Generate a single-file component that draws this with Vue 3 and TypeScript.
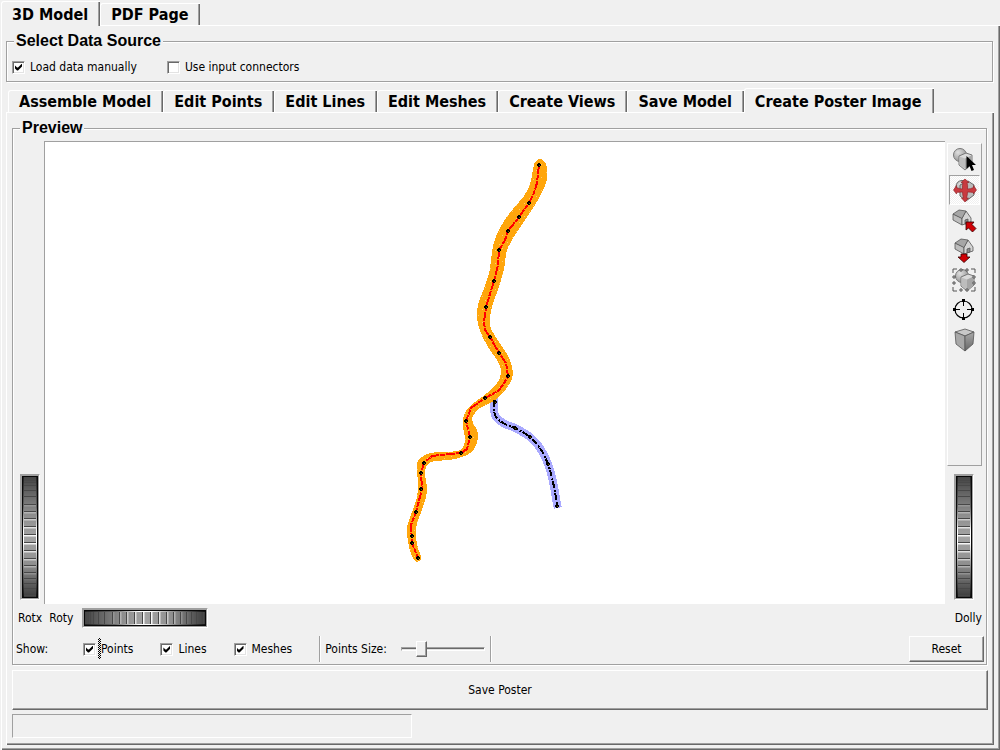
<script setup lang="ts">
import { ref } from 'vue'

type Point = [number, number]

const outerTabs = ['3D Model', 'PDF Page']
const innerTabs = [
  'Assemble Model',
  'Edit Points',
  'Edit Lines',
  'Edit Meshes',
  'Create Views',
  'Save Model',
  'Create Poster Image',
]
const outerTab = ref('3D Model')
const innerTab = ref('Create Poster Image')
const source = ref({ manual: true, connectors: false })
const show = ref({ points: true, lines: true, meshes: true })
const pointsSize = ref(20)

const tools = ['Select', 'Rotate', 'Home', 'Set home', 'View all', 'Seek', 'Projection']
const tool = ref('Rotate')

const ticks = [2, 4, 6, 9, 14, 20, 28, 35, 42, 50, 58, 66, 74, 82, 89, 96, 102, 107, 112, 116, 119]
const glow = (y: number) => Math.max(0, 1 - Math.abs(y - 62) / 42)

function smooth(points: Point[], closed: boolean): string {
  const n = points.length
  const at = (i: number): Point =>
    closed ? points[(i + n) % n] : points[Math.min(n - 1, Math.max(0, i))]
  let d = `M${points[0][0]} ${points[0][1]}`
  for (let i = 0; i < (closed ? n : n - 1); i++) {
    const [a, b, c, e] = [at(i - 1), at(i), at(i + 1), at(i + 2)]
    d += ` C${b[0] + (c[0] - a[0]) / 6} ${b[1] + (c[1] - a[1]) / 6}`
    d += ` ${c[0] - (e[0] - b[0]) / 6} ${c[1] - (e[1] - b[1]) / 6} ${c[0]} ${c[1]}`
  }
  return closed ? d + 'Z' : d
}

const vessel = smooth([
  [540, 159], [535, 162], [533, 170], [530, 184], [524, 196], [513, 209], [504, 221], [497, 234],
  [493, 246], [491, 260], [489, 274], [483, 291], [478, 305], [477, 318], [480, 331], [488, 347],
  [497, 360], [501, 370], [499, 380], [493, 388], [482, 397], [470, 406], [464, 415], [463, 427],
  [465, 438], [463, 447], [457, 451], [443, 452], [430, 453], [422, 457], [417, 463], [417, 473],
  [418, 483], [417, 497], [412, 512], [408, 523], [407, 533], [409, 547], [413, 558], [417, 562],
  [421, 558], [418, 548], [416, 537], [417, 523], [422, 510], [426, 497], [427, 487], [425, 475],
  [427, 465], [435, 461], [450, 460], [465, 456], [474, 449], [478, 438], [477, 430], [473, 423],
  [473, 416], [480, 408], [492, 402], [502, 394], [510, 383], [513, 373], [510, 360], [503, 348],
  [495, 336], [490, 326], [490, 317], [493, 303], [498, 290], [503, 273], [505, 263], [507, 250],
  [515, 235], [527, 217], [538, 200], [546, 183], [547, 170], [545, 162],
], true)

const centerLine =
  '539,165 537,183 534,193 529,203 519,217 508,231 505,240 499,250 498,265 494,281 490,294 486,307 484,322 485,330 490,337 499,353 506,363 508,376 503,385 498,391 485,398 471,408 466,421 470,437 467,449 461,453 450,454 432,456 424,463 421,473 422,489 416,512 411,525 412,543 418,558'

const branch = smooth([
  [494, 400], [495, 415], [503, 423], [515, 428], [530, 437], [540, 448], [548, 464], [553, 482], [557, 504],
], false)

const nodes: Point[] = [
  [539, 165], [529, 203], [519, 217], [508, 231], [499, 250], [494, 281], [486, 307], [490, 337],
  [499, 353], [508, 376], [485, 398], [466, 421], [470, 437], [461, 453], [424, 463], [421, 473],
  [421, 489], [416, 512], [412, 536], [412, 543], [418, 558], [495, 402], [515, 428], [530, 437],
  [548, 464], [557, 506],
]
</script>

<template>
  <main class="window">
    <div class="tabs" role="tablist">
      <button
        v-for="t in outerTabs"
        :key="t"
        class="tab"
        :class="{ active: outerTab === t }"
        role="tab"
        :aria-selected="outerTab === t"
        @click="outerTab = t"
      >{{ t }}</button>
    </div>

    <section class="page">
      <fieldset class="group source">
        <legend>Select Data Source</legend>
        <label class="check"><input v-model="source.manual" type="checkbox" />Load data manually</label>
        <label class="check"><input v-model="source.connectors" type="checkbox" />Use input connectors</label>
      </fieldset>

      <div class="tabs inner" role="tablist">
        <button
          v-for="t in innerTabs"
          :key="t"
          class="tab"
          :class="{ active: innerTab === t }"
          role="tab"
          :aria-selected="innerTab === t"
          @click="innerTab = t"
        >{{ t }}</button>
      </div>

      <section class="page panel">
        <fieldset class="group">
          <legend>Preview</legend>
          <div class="stage">
            <div class="side left">
              <div class="wheel">
                <svg width="16" height="122" viewBox="0 0 16 122" shape-rendering="crispEdges">
                  <defs>
                    <linearGradient id="rim" x1="0" y1="0" x2="0" y2="1">
                      <stop offset="0" stop-color="#222" /><stop offset="0.25" stop-color="#666" />
                      <stop offset="0.45" stop-color="#fff" /><stop offset="0.55" stop-color="#fff" />
                      <stop offset="0.78" stop-color="#777" /><stop offset="1" stop-color="#111" />
                    </linearGradient>
                    <linearGradient id="face" x1="0" y1="0" x2="0" y2="1">
                      <stop offset="0" stop-color="#444" /><stop offset="0.3" stop-color="#8c8c8c" />
                      <stop offset="0.5" stop-color="#a4a4a4" /><stop offset="0.72" stop-color="#909090" />
                      <stop offset="1" stop-color="#3c3c3c" />
                    </linearGradient>
                    <g id="drum">
                      <rect width="16" height="122" fill="#080808" />
                      <rect x="1" y="1" width="14" height="120" fill="url(#rim)" />
                      <rect x="2" y="1" width="12" height="120" fill="url(#face)" />
                      <g v-for="y in ticks" :key="y">
                        <rect x="2" :y="y" width="12" height="1" fill="#484848" />
                        <rect x="2" :y="y + 1" width="12" height="1" fill="#fff" :opacity="glow(y)" />
                        <rect x="2" :y="y + 2" width="12" height="1" fill="#fff" :opacity="glow(y) * 0.5" />
                      </g>
                    </g>
                  </defs>
                  <use href="#drum" />
                </svg>
              </div>
            </div>

            <svg class="canvas" viewBox="0 0 900 462" role="img" aria-label="Vessel model">
              <defs>
                <pattern id="specks" width="17" height="13" patternUnits="userSpaceOnUse">
                  <rect width="17" height="13" fill="#ffa60c" />
                  <path d="M2 3h1v1h-1zM9 1h1v1h-1zM14 8h1v1h-1zM6 10h1v1h-1z" fill="#ffcb6b" />
                </pattern>
              </defs>
              <g transform="translate(-45 -142)" shape-rendering="crispEdges" fill="none">
                <g v-if="show.meshes">
                  <path :d="branch" stroke="#aaaaff" stroke-width="8" stroke-linecap="square" />
                  <path :d="vessel" fill="url(#specks)" />
                </g>
                <g v-if="show.lines">
                  <polyline :points="centerLine" stroke="#f00" stroke-width="2" stroke-dasharray="9 1 5 1" />
                  <path :d="branch" stroke="#000" stroke-width="2" stroke-dasharray="7 2 2 1" />
                </g>
                <g v-if="show.points">
                  <g v-for="(p, i) in nodes" :key="i" :transform="`translate(${p[0]} ${p[1]})`">
                    <path d="M-1 -2h2v1h1v2h-1v1h-2v-1h-1v-2h1z" fill="#000" />
                    <path d="M0 0h1v1h-1z" fill="#775500" />
                  </g>
                </g>
              </g>
            </svg>

            <div class="side right">
              <div class="toolbar">
                <button
                  v-for="name in tools"
                  :key="name"
                  class="tool"
                  :class="{ on: tool === name }"
                  :aria-label="name"
                  @click="tool = name"
                >
                  <svg width="25" height="25" viewBox="0 0 25 25">
                    <defs v-if="name === 'Select'">
                      <radialGradient id="ball" cx="0.35" cy="0.3" r="0.8">
                        <stop offset="0" stop-color="#e0e0e0" /><stop offset="1" stop-color="#8c8c8c" />
                      </radialGradient>
                      <linearGradient id="block" x1="0" y1="0" x2="0" y2="1">
                        <stop offset="0" stop-color="#aaa" /><stop offset="1" stop-color="#666" />
                      </linearGradient>
                      <g id="solids">
                        <circle cx="8" cy="7" r="6.500" fill="url(#ball)" stroke="#777" />
                        <path d="M7 8l7-3 6 2v9l-7 6-6-5z" fill="#dadada" stroke="#777" />
                        <path d="M7.500 8.500l5.500 2v10.500l-5.500-4.500z" fill="#bdbdbd" />
                        <path d="M13 10.500l6.500-3v8.500l-6.500 5.500z" fill="#a6a6a6" />
                      </g>
                      <g id="house" stroke="#555" stroke-width="0.8" stroke-linejoin="round">
                        <path d="M1 6l9 4v7l-9-5z" fill="#bdbdbd" />
                        <path d="M10 10l4-7 5 7v4l-9 3z" fill="#d4d4d4" />
                        <path d="M1 6l6-4 7 1-4 7.500z" fill="#a6a6a6" />
                        <path d="M13 16v-4l3-1v4z" fill="#8a8a8a" />
                      </g>
                    </defs>
                    <g v-if="name === 'Select'">
                      <use href="#solids" />
                      <path d="M14.500 8v13l3-3 2 5 2.500-1-2-5h4z" fill="#000" />
                    </g>
                    <g v-else-if="name === 'Rotate'">
                      <circle cx="10" cy="8.500" r="6" fill="url(#ball)" stroke="#666" />
                      <path d="M8 7l8-4 6 4v10l-8 6-6-5z" fill="#bbb" stroke="#666" />
                      <path
                        d="M13 1l4 3.500h-2q1 3 .5 6.500 3 0 6-1.500v-2l3 4.500-3 4v-1.500q-3-.5-6-.5 0 3-1 6h2l-3.500 4-3.500-4h2q-1-3-1-6-3 0-6 .5v1.500l-3-4 3-4.500v2q3 1.500 6 1.500-.5-3.500.5-6.500h-2z"
                        fill="#c93a40" stroke="#8e1b20" stroke-width="0.6"
                      />
                    </g>
                    <g v-else-if="name === 'Home'">
                      <use href="#house" />
                      <path d="M14 14h8l-2 2.500 4 4-3.500 3.500-4-4-2.500 2z" fill="#d00005" stroke="#300" stroke-width="0.8" />
                    </g>
                    <g v-else-if="name === 'Set home'">
                      <use href="#house" transform="translate(2 -1)" />
                      <path d="M9 16h6v3h3l-6 5.500-6-5.500h3z" fill="#d00005" stroke="#300" stroke-width="0.8" />
                    </g>
                    <g v-else-if="name === 'View all'">
                      <use href="#solids" transform="translate(2 1)" />
                      <path
                        d="M1 5v-4h4M8 1h2v2h-2zM14 1h2v2h-2zM19 1h4v4M1 8h2v2h-2zM1 14h2v2h-2zM21 8h2v2h-2zM21 14h2v2h-2zM1 19v4h4M8 21h2v2h-2zM14 21h2v2h-2zM19 23h4v-4"
                        fill="#f0f0f0" stroke="#555"
                      />
                    </g>
                    <g v-else-if="name === 'Seek'">
                      <circle cx="11.500" cy="11.500" r="8.500" fill="none" stroke="#000" stroke-width="1.200" />
                      <path d="M11.500 2v6M11.500 15v6M2 11.500h6M15 11.500h6" stroke="#000" />
                      <path d="M10 1h3v3h-3zM10 19h3v3h-3zM1 10h3v3h-3zM19 10h3v3h-3z" fill="#000" />
                    </g>
                    <g v-else stroke="#555" stroke-width="0.8" stroke-linejoin="round">
                      <path d="M3 4l10-3 9 3-9 4z" fill="#c8c8c8" />
                      <path d="M3 4l10 4v15l-9-7z" fill="#a8a8a8" />
                      <path d="M13 8l9-4-1 12-8 7z" fill="url(#block)" />
                    </g>
                  </svg>
                </button>
              </div>
              <div class="wheel">
                <svg width="16" height="122" viewBox="0 0 16 122" shape-rendering="crispEdges"><use href="#drum" /></svg>
              </div>
            </div>
          </div>

          <div class="row rotation">
            <span>Rotx</span>
            <span>Roty</span>
            <div class="wheel">
              <svg width="122" height="16" viewBox="0 0 122 16" shape-rendering="crispEdges">
                <use href="#drum" transform="matrix(0 1 1 0 0 0)" />
              </svg>
            </div>
            <span class="dolly">Dolly</span>
          </div>

          <div class="row options">
            <span class="show">Show:</span>
            <label class="check focus"><input v-model="show.points" type="checkbox" /><span>Points</span></label>
            <label class="check"><input v-model="show.lines" type="checkbox" />Lines</label>
            <label class="check"><input v-model="show.meshes" type="checkbox" />Meshes</label>
            <div class="size">
              <label for="points-size">Points Size:</label>
              <input id="points-size" v-model="pointsSize" type="range" min="0" max="100" />
            </div>
            <button class="push reset">Reset</button>
          </div>
        </fieldset>

        <button class="push save">Save Poster</button>
        <div class="status" role="status"></div>
      </section>
    </section>
  </main>
</template>

<style>
body {
  margin: 0;
  background: #f0f0f0;
}
</style>

<style scoped>
* {
  box-sizing: border-box;
}
.window {
  display: flex;
  flex-direction: column;
  min-height: 100vh;
  padding: 1px 0 0 1px;
  background: #f0f0f0;
  color: #000;
  font: 12px/16px Tahoma, 'DejaVu Sans Condensed', 'DejaVu Sans', sans-serif;
}
button {
  font: inherit;
  color: inherit;
  background: #f0f0f0;
}
.tabs {
  display: flex;
  align-items: flex-end;
  height: 24px;
}
.tab {
  height: 22px;
  padding: 1px 12px 0 10px;
  border: 0;
  border-top: 1px solid #fff;
  border-left: 1px solid #fff;
  border-radius: 3px 0 0 0;
  box-shadow: inset -1px 0 #696969, inset -2px 0 #a0a0a0;
  font-size: 16px;
  font-weight: bold;
  line-height: 20px;
  white-space: nowrap;
}
.tab.active {
  height: 25px;
  margin-bottom: -1px;
  z-index: 1;
}
.inner {
  margin: 6px 0 0 2px;
}
.page {
  flex: 1;
  display: flex;
  flex-direction: column;
  padding: 5px 6px 5px 4px;
  border-top: 1px solid #fff;
  border-left: 1px solid #fff;
  box-shadow: inset -1px -1px #696969, inset -2px -2px #a0a0a0;
}
.panel {
  padding: 5px 6px 7px 5px;
}
.group {
  margin: 0 1px 0 0;
  padding: 0;
  border: 1px solid #a0a0a0;
  box-shadow: 1px 1px #fff, inset 1px 1px #fff;
  min-width: 0;
}
.group legend {
  margin-left: 7px;
  padding: 0 2px;
  background: #f0f0f0;
  font: bold 16px/20px Arial, 'Liberation Sans', sans-serif;
}
.source {
  height: 51px;
}
.source .check {
  margin: 8px 25px 0 5px;
}
.check {
  display: inline-flex;
  align-items: center;
  gap: 5px;
}
.check input {
  appearance: none;
  flex: none;
  width: 13px;
  height: 13px;
  margin: 0;
  padding: 1px;
  background: #fff;
  border: 1px solid;
  border-color: #a0a0a0 #fff #fff #a0a0a0;
  box-shadow: inset 1px 1px #696969, inset -1px -1px #e3e3e3;
}
.check input:checked::after {
  content: '';
  display: block;
  width: 7px;
  height: 7px;
  margin: 1px;
  background: #000;
  clip-path: polygon(0 2px, 2px 4px, 3px 4px, 7px 0, 7px 3px, 3px 7px, 2px 7px, 0 5px);
}
.stage {
  display: grid;
  grid-template-columns: 31px 1fr 41px;
  height: calc(100vh - 287px);
  min-height: 380px;
  margin-top: 3px;
}
.canvas {
  width: 100%;
  height: 100%;
  background: #fff;
  border-top: 1px solid #a0a0a0;
  border-left: 1px solid #a0a0a0;
}
.side {
  display: flex;
  flex-direction: column;
  padding-bottom: 4px;
}
.left {
  justify-content: flex-end;
  padding-left: 7px;
}
.right {
  padding-left: 2px;
}
.right .wheel {
  margin: 8px 0 0 7px;
}
.wheel {
  align-self: flex-start;
  padding: 1px;
  border: 1px solid;
  border-color: #a0a0a0 #fff #fff #a0a0a0;
  background: #a0a0a0;
}
.wheel svg {
  display: block;
}
.toolbar {
  flex: 1;
  width: 35px;
  margin-top: 2px;
  padding: 1px;
  border: 1px solid;
  border-color: #fff #a0a0a0 #a0a0a0 #fff;
}
.tool {
  display: block;
  width: 31px;
  height: 30px;
  padding: 2px;
  border: 1px solid transparent;
}
.tool svg {
  display: block;
}
.tool.on {
  border-color: #a0a0a0 #fff #fff #a0a0a0;
  background: repeating-conic-gradient(#fff 0 25%, #f0f0f0 0 50%) 0 0 / 2px 2px;
}
.row {
  display: flex;
  align-items: center;
}
.rotation {
  gap: 7px;
  height: 20px;
  margin-top: 4px;
  padding: 0 4px 0 5px;
}
.rotation .wheel {
  align-self: center;
  margin-left: 2px;
}
.dolly {
  margin-left: auto;
}
.options {
  height: 26px;
  margin: 8px 2px 2px 3px;
}
.show {
  width: 67px;
}
.options .check {
  margin-right: 27px;
}
.focus span {
  position: relative;
}
.focus span::before {
  content: '';
  position: absolute;
  left: -3px;
  top: -3px;
  width: 3px;
  height: 21px;
  background: repeating-conic-gradient(#000 0 25%, #f0f0f0 0 50%) 0 0 / 2px 2px;
}
.size {
  display: flex;
  align-items: center;
  align-self: stretch;
  gap: 14px;
  padding: 0 5px;
  border-left: 1px solid #a0a0a0;
  border-right: 1px solid #a0a0a0;
  box-shadow: 1px 0 #fff, inset 1px 0 #fff;
}
.size input {
  appearance: none;
  width: 84px;
  height: 17px;
  margin: 0;
  background: transparent;
}
.size input::-webkit-slider-runnable-track {
  height: 4px;
  background: #696969;
  border: 1px solid;
  border-color: #a0a0a0 #fff #fff #a0a0a0;
  box-shadow: inset 0 -1px #e3e3e3;
}
.size input::-webkit-slider-thumb {
  appearance: none;
  width: 11px;
  height: 16px;
  margin-top: -7px;
  background: #f0f0f0;
  border: 1px solid;
  border-color: #fff #696969 #696969 #fff;
  box-shadow: inset -1px -1px #a0a0a0;
}
.push {
  border: 1px solid;
  border-color: #fff #696969 #696969 #fff;
  box-shadow: inset -1px -1px #a0a0a0;
}
.reset {
  width: 75px;
  height: 26px;
  margin-left: auto;
}
.save {
  height: 40px;
  margin-top: 5px;
}
.status {
  width: 41%;
  height: 24px;
  margin-top: 4px;
  border: 1px solid;
  border-color: #a0a0a0 #fff #fff #a0a0a0;
}
</style>
